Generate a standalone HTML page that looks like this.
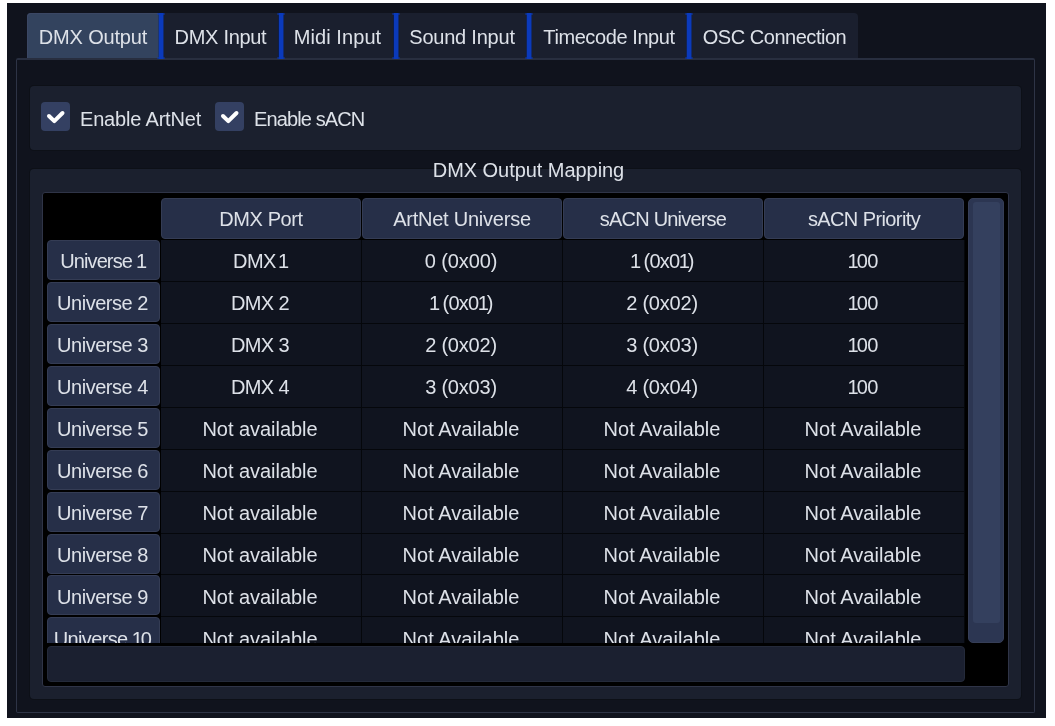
<!DOCTYPE html><html><head><meta charset="utf-8"><style>
*{margin:0;padding:0;box-sizing:border-box}
html,body{width:1055px;height:726px;overflow:hidden;background:#fff}
body{position:relative;font-family:"Liberation Sans",sans-serif;font-size:20px;color:#dde1e8}
.a{position:absolute}
.t{position:absolute;height:20px;line-height:20px;white-space:nowrap;will-change:transform}
.c{text-align:center}
.win{left:7px;top:3px;width:1039px;height:715px;background:#10131d}
.tab{top:13px;height:45px;background:#1a1f2e}
.tab.sel{background:#33435e;box-shadow:inset 1px 1px 0 #3b4764}
.tab.first{border-top-left-radius:4px}
.tab.last{border-top-right-radius:4px}
.blue::before,.blue::after{content:'';position:absolute;left:-1px;width:8px;height:2px;background:rgba(11,58,187,.55);border-radius:1px}.blue::before{top:0}.blue::after{bottom:0}
.blue{top:13px;width:6px;height:46px;margin-left:-1px;background:linear-gradient(90deg,rgba(10,40,120,.5) 0,rgba(10,40,120,.5) 1px,#0b3abb 1px,#0b3abb 5px,rgba(10,50,160,.6) 5px)}
.pane{left:16px;top:58px;width:1019px;height:655px;border:1px solid #2e3446;border-top:2px solid #282e3f;border-radius:2px;background:#10131d}
.gb{left:30px;width:991px;background:#1b202e;border-radius:4px;box-shadow:0 0 0 1px #0d1017}
.cb{width:29px;height:29px;background:#344062;border-radius:4px}
.cb svg{position:absolute;left:0;top:0}
.frame{left:42px;top:192px;width:967px;height:495px;background:#000;border:1px solid #2f3447;border-radius:3px}
.hdr{top:198px;height:41px;background:#262f48;border:1px solid #343c54;border-radius:4px}
.rh{left:4px;width:113px;height:40px;background:#262f48;border:1px solid #343c54;border-radius:4px}
.clip{left:43px;top:240px;width:922px;height:403px;overflow:hidden}
.cell{height:42px;background:#10141f;border-right:1px solid #05070b;border-bottom:1px solid #05070b}
.vs{left:968px;top:198px;width:36px;height:445px;background:#2c3652;border:1px solid #363e57;border-radius:5px}
.vh{left:973px;top:202px;width:27px;height:421px;background:#34405e;border-radius:3px}
.hs{left:47px;top:646px;width:918px;height:36px;background:#1b2030;border:1px solid #242a3a;border-radius:4px}
</style></head><body>
<div class="a win"></div>
<div class="a pane"></div>
<div class="a tab sel first" style="left:27px;width:132px"></div>
<div class="t c" style="left:27px;width:132px;top:27px"><span style="letter-spacing:-0.17px">DMX Output</span></div>
<div class="a tab" style="left:163px;width:115px"></div>
<div class="t c" style="left:163px;width:115px;top:27px"><span style="letter-spacing:-0.3px">DMX Input</span></div>
<div class="a tab" style="left:282px;width:111px"></div>
<div class="t c" style="left:282px;width:111px;top:27px"><span style="letter-spacing:0.08px">Midi Input</span></div>
<div class="a tab" style="left:397px;width:130px"></div>
<div class="t c" style="left:397px;width:130px;top:27px"><span style="letter-spacing:-0.22px">Sound Input</span></div>
<div class="a tab" style="left:531px;width:156px"></div>
<div class="t c" style="left:531px;width:156px;top:27px"><span style="letter-spacing:-0.41px">Timecode Input</span></div>
<div class="a tab last" style="left:691px;width:167px"></div>
<div class="t c" style="left:691px;width:167px;top:27px"><span style="letter-spacing:-0.47px">OSC Connection</span></div>
<div class="a blue" style="left:159px"></div>
<div class="a blue" style="left:279px"></div>
<div class="a blue" style="left:394px"></div>
<div class="a blue" style="left:527px"></div>
<div class="a blue" style="left:687px"></div>
<div class="a gb" style="top:86px;height:64px"></div>
<div class="a cb" style="left:41px;top:102px"><svg width="29" height="29" viewBox="-0.5 -0.5 29 29"><path d="M7.5 13.5 L12.8 18.6 L21 10.5" fill="none" stroke="#fff" stroke-width="4" stroke-linecap="round" stroke-linejoin="round"/></svg></div>
<div class="t" style="left:80px;top:109px"><span style="letter-spacing:-0.18px">Enable ArtNet</span></div>
<div class="a cb" style="left:215px;top:102px"><svg width="29" height="29" viewBox="-0.5 -0.5 29 29"><path d="M7.5 13.5 L12.8 18.6 L21 10.5" fill="none" stroke="#fff" stroke-width="4" stroke-linecap="round" stroke-linejoin="round"/></svg></div>
<div class="t" style="left:254px;top:109px"><span style="letter-spacing:-0.88px">Enable sACN</span></div>
<div class="a gb" style="top:169px;height:530px"></div>
<div class="t c" style="left:16px;width:1025px;top:160px"><span style="letter-spacing:-0.05px">DMX Output Mapping</span></div>
<div class="a frame"></div>
<div class="a hdr" style="left:161px;width:200px"></div>
<div class="t c" style="left:161px;width:200px;top:209px"><span style="letter-spacing:-0.39px">DMX Port</span></div>
<div class="a hdr" style="left:362px;width:200px"></div>
<div class="t c" style="left:362px;width:200px;top:209px"><span style="letter-spacing:-0.23px">ArtNet Universe</span></div>
<div class="a hdr" style="left:563px;width:200px"></div>
<div class="t c" style="left:563px;width:200px;top:209px"><span style="letter-spacing:-0.8px">sACN Universe</span></div>
<div class="a hdr" style="left:764px;width:200px"></div>
<div class="t c" style="left:764px;width:200px;top:209px"><span style="letter-spacing:-0.6px">sACN Priority</span></div>
<div class="a clip">
<div class="a rh" style="top:0px"></div>
<div class="t c" style="left:3px;width:113px;top:11px"><span style="letter-spacing:-0.89px">Universe <span style="margin:0 -1.5px 0 -0.6px">1</span></span></div>
<div class="a cell" style="left:118px;top:0px;width:201px;height:42px"></div>
<div class="t c" style="left:117px;top:11px;width:200px"><span style="letter-spacing:-0.45px;word-spacing:-2.6px">DMX <span style="margin:0 -1.5px 0 -0.6px">1</span></span></div>
<div class="a cell" style="left:319px;top:0px;width:201px;height:42px"></div>
<div class="t c" style="left:318px;top:11px;width:200px"><span style="letter-spacing:-0.13px">0 (0x00)</span></div>
<div class="a cell" style="left:520px;top:0px;width:201px;height:42px"></div>
<div class="t c" style="left:519px;top:11px;width:200px"><span style="letter-spacing:-0.77px"><span style="margin:0 -1.5px 0 -0.6px">1</span> (0x0<span style="margin:0 -1.5px 0 -0.6px">1</span>)</span></div>
<div class="a cell" style="left:721px;top:0px;width:201px;height:42px"></div>
<div class="t c" style="left:720px;top:11px;width:200px"><span style="letter-spacing:-0.5px"><span style="margin:0 -1.5px 0 -0.6px">1</span>00</span></div>
<div class="a rh" style="top:42px"></div>
<div class="t c" style="left:3px;width:113px;top:53px"><span style="letter-spacing:-0.46px">Universe 2</span></div>
<div class="a cell" style="left:118px;top:42px;width:201px;height:42px"></div>
<div class="t c" style="left:117px;top:53px;width:200px"><span style="letter-spacing:-0.6px">DMX 2</span></div>
<div class="a cell" style="left:319px;top:42px;width:201px;height:42px"></div>
<div class="t c" style="left:318px;top:53px;width:200px"><span style="letter-spacing:-0.77px"><span style="margin:0 -1.5px 0 -0.6px">1</span> (0x0<span style="margin:0 -1.5px 0 -0.6px">1</span>)</span></div>
<div class="a cell" style="left:520px;top:42px;width:201px;height:42px"></div>
<div class="t c" style="left:519px;top:53px;width:200px"><span style="letter-spacing:-0.21px">2 (0x02)</span></div>
<div class="a cell" style="left:721px;top:42px;width:201px;height:42px"></div>
<div class="t c" style="left:720px;top:53px;width:200px"><span style="letter-spacing:-0.5px"><span style="margin:0 -1.5px 0 -0.6px">1</span>00</span></div>
<div class="a rh" style="top:84px"></div>
<div class="t c" style="left:3px;width:113px;top:95px"><span style="letter-spacing:-0.46px">Universe 3</span></div>
<div class="a cell" style="left:118px;top:84px;width:201px;height:42px"></div>
<div class="t c" style="left:117px;top:95px;width:200px"><span style="letter-spacing:-0.6px">DMX 3</span></div>
<div class="a cell" style="left:319px;top:84px;width:201px;height:42px"></div>
<div class="t c" style="left:318px;top:95px;width:200px"><span style="letter-spacing:-0.21px">2 (0x02)</span></div>
<div class="a cell" style="left:520px;top:84px;width:201px;height:42px"></div>
<div class="t c" style="left:519px;top:95px;width:200px"><span style="letter-spacing:-0.21px">3 (0x03)</span></div>
<div class="a cell" style="left:721px;top:84px;width:201px;height:42px"></div>
<div class="t c" style="left:720px;top:95px;width:200px"><span style="letter-spacing:-0.5px"><span style="margin:0 -1.5px 0 -0.6px">1</span>00</span></div>
<div class="a rh" style="top:126px"></div>
<div class="t c" style="left:3px;width:113px;top:137px"><span style="letter-spacing:-0.46px">Universe 4</span></div>
<div class="a cell" style="left:118px;top:126px;width:201px;height:42px"></div>
<div class="t c" style="left:117px;top:137px;width:200px"><span style="letter-spacing:-0.6px">DMX 4</span></div>
<div class="a cell" style="left:319px;top:126px;width:201px;height:42px"></div>
<div class="t c" style="left:318px;top:137px;width:200px"><span style="letter-spacing:-0.21px">3 (0x03)</span></div>
<div class="a cell" style="left:520px;top:126px;width:201px;height:42px"></div>
<div class="t c" style="left:519px;top:137px;width:200px"><span style="letter-spacing:-0.21px">4 (0x04)</span></div>
<div class="a cell" style="left:721px;top:126px;width:201px;height:42px"></div>
<div class="t c" style="left:720px;top:137px;width:200px"><span style="letter-spacing:-0.5px"><span style="margin:0 -1.5px 0 -0.6px">1</span>00</span></div>
<div class="a rh" style="top:168px"></div>
<div class="t c" style="left:3px;width:113px;top:179px"><span style="letter-spacing:-0.46px">Universe 5</span></div>
<div class="a cell" style="left:118px;top:168px;width:201px;height:42px"></div>
<div class="t c" style="left:117px;top:179px;width:200px"><span style="letter-spacing:-0.03px">Not available</span></div>
<div class="a cell" style="left:319px;top:168px;width:201px;height:42px"></div>
<div class="t c" style="left:318px;top:179px;width:200px"><span style="letter-spacing:0.05px">Not Available</span></div>
<div class="a cell" style="left:520px;top:168px;width:201px;height:42px"></div>
<div class="t c" style="left:519px;top:179px;width:200px"><span style="letter-spacing:0.05px">Not Available</span></div>
<div class="a cell" style="left:721px;top:168px;width:201px;height:42px"></div>
<div class="t c" style="left:720px;top:179px;width:200px"><span style="letter-spacing:0.05px">Not Available</span></div>
<div class="a rh" style="top:210px"></div>
<div class="t c" style="left:3px;width:113px;top:221px"><span style="letter-spacing:-0.46px">Universe 6</span></div>
<div class="a cell" style="left:118px;top:210px;width:201px;height:42px"></div>
<div class="t c" style="left:117px;top:221px;width:200px"><span style="letter-spacing:-0.03px">Not available</span></div>
<div class="a cell" style="left:319px;top:210px;width:201px;height:42px"></div>
<div class="t c" style="left:318px;top:221px;width:200px"><span style="letter-spacing:0.05px">Not Available</span></div>
<div class="a cell" style="left:520px;top:210px;width:201px;height:42px"></div>
<div class="t c" style="left:519px;top:221px;width:200px"><span style="letter-spacing:0.05px">Not Available</span></div>
<div class="a cell" style="left:721px;top:210px;width:201px;height:42px"></div>
<div class="t c" style="left:720px;top:221px;width:200px"><span style="letter-spacing:0.05px">Not Available</span></div>
<div class="a rh" style="top:252px"></div>
<div class="t c" style="left:3px;width:113px;top:263px"><span style="letter-spacing:-0.46px">Universe 7</span></div>
<div class="a cell" style="left:118px;top:252px;width:201px;height:42px"></div>
<div class="t c" style="left:117px;top:263px;width:200px"><span style="letter-spacing:-0.03px">Not available</span></div>
<div class="a cell" style="left:319px;top:252px;width:201px;height:42px"></div>
<div class="t c" style="left:318px;top:263px;width:200px"><span style="letter-spacing:0.05px">Not Available</span></div>
<div class="a cell" style="left:520px;top:252px;width:201px;height:42px"></div>
<div class="t c" style="left:519px;top:263px;width:200px"><span style="letter-spacing:0.05px">Not Available</span></div>
<div class="a cell" style="left:721px;top:252px;width:201px;height:42px"></div>
<div class="t c" style="left:720px;top:263px;width:200px"><span style="letter-spacing:0.05px">Not Available</span></div>
<div class="a rh" style="top:294px"></div>
<div class="t c" style="left:3px;width:113px;top:305px"><span style="letter-spacing:-0.46px">Universe 8</span></div>
<div class="a cell" style="left:118px;top:294px;width:201px;height:41px"></div>
<div class="t c" style="left:117px;top:305px;width:200px"><span style="letter-spacing:-0.03px">Not available</span></div>
<div class="a cell" style="left:319px;top:294px;width:201px;height:41px"></div>
<div class="t c" style="left:318px;top:305px;width:200px"><span style="letter-spacing:0.05px">Not Available</span></div>
<div class="a cell" style="left:520px;top:294px;width:201px;height:41px"></div>
<div class="t c" style="left:519px;top:305px;width:200px"><span style="letter-spacing:0.05px">Not Available</span></div>
<div class="a cell" style="left:721px;top:294px;width:201px;height:41px"></div>
<div class="t c" style="left:720px;top:305px;width:200px"><span style="letter-spacing:0.05px">Not Available</span></div>
<div class="a rh" style="top:335px"></div>
<div class="t c" style="left:3px;width:113px;top:347px"><span style="letter-spacing:-0.46px">Universe 9</span></div>
<div class="a cell" style="left:118px;top:335px;width:201px;height:42px"></div>
<div class="t c" style="left:117px;top:347px;width:200px"><span style="letter-spacing:-0.03px">Not available</span></div>
<div class="a cell" style="left:319px;top:335px;width:201px;height:42px"></div>
<div class="t c" style="left:318px;top:347px;width:200px"><span style="letter-spacing:0.05px">Not Available</span></div>
<div class="a cell" style="left:520px;top:335px;width:201px;height:42px"></div>
<div class="t c" style="left:519px;top:347px;width:200px"><span style="letter-spacing:0.05px">Not Available</span></div>
<div class="a cell" style="left:721px;top:335px;width:201px;height:42px"></div>
<div class="t c" style="left:720px;top:347px;width:200px"><span style="letter-spacing:0.05px">Not Available</span></div>
<div class="a rh" style="top:377px"></div>
<div class="t c" style="left:3px;width:113px;top:389px"><span style="letter-spacing:-0.64px">Universe <span style="margin:0 -1.5px 0 -0.6px">1</span>0</span></div>
<div class="a cell" style="left:118px;top:377px;width:201px;height:42px"></div>
<div class="t c" style="left:117px;top:389px;width:200px"><span style="letter-spacing:-0.03px">Not available</span></div>
<div class="a cell" style="left:319px;top:377px;width:201px;height:42px"></div>
<div class="t c" style="left:318px;top:389px;width:200px"><span style="letter-spacing:0.05px">Not Available</span></div>
<div class="a cell" style="left:520px;top:377px;width:201px;height:42px"></div>
<div class="t c" style="left:519px;top:389px;width:200px"><span style="letter-spacing:0.05px">Not Available</span></div>
<div class="a cell" style="left:721px;top:377px;width:201px;height:42px"></div>
<div class="t c" style="left:720px;top:389px;width:200px"><span style="letter-spacing:0.05px">Not Available</span></div>
</div>
<div class="a vs"></div><div class="a vh"></div>
<div class="a hs"></div>
</body></html>
